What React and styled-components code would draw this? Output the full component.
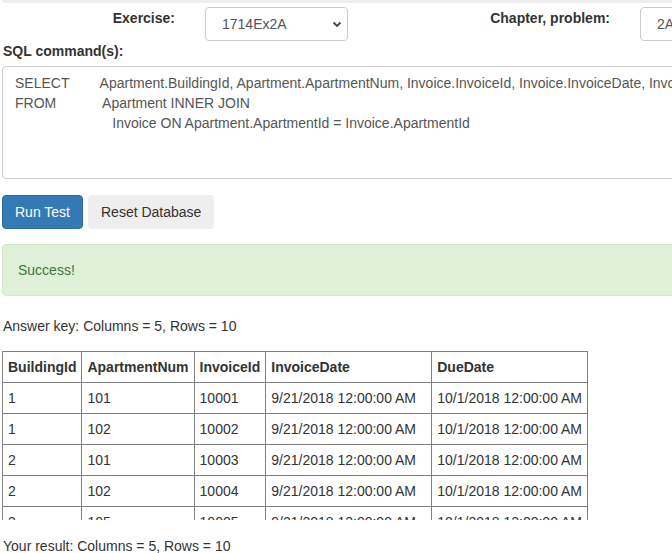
import React from "react";
import styled, { createGlobalStyle } from "styled-components";

const Global = createGlobalStyle`
  html, body { margin: 0; padding: 0; background: #fff; overflow: hidden; }
  body {
    font-family: "Liberation Sans", Arial, sans-serif;
    font-size: 14px;
    line-height: 20px;
    color: #333;
  }
  * { box-sizing: border-box; }
`;

const Page = styled.div`
  width: 820px;
  padding-left: 2px;
`;

const TopPanel = styled.div`
  height: 3px;
  background: #eeeeee;
  border-radius: 0 0 4px 4px;
`;

const ControlRow = styled.div`
  display: grid;
  grid-template-columns: 173px 143px 232px 143px;
  column-gap: 30px;
  align-items: start;
  padding-top: 4px;
`;

const Label = styled.div`
  font-weight: bold;
  text-align: ${(p) => (p.$right ? "right" : "left")};
  padding-top: ${(p) => (p.$right ? "1px" : "0")};
  padding-left: ${(p) => (p.$right ? "0" : "1px")};
`;

const FakeSelect = styled.div`
  height: 34px;
  border: 1px solid #ccc;
  border-radius: 4px;
  display: flex;
  align-items: center;
  justify-content: space-between;
  padding: 0 5px 1px 16px;
  color: #555;
  font-size: 14px;
  white-space: nowrap;
  overflow: hidden;
`;

const SqlLabel = styled(Label)`
  margin-top: 0;
  margin-bottom: 5px;
`;

const Sql = styled.textarea`
  display: block;
  width: 800px;
  height: 113px;
  border: 1px solid #ccc;
  border-radius: 4px;
  padding: 6px 12px;
  font-family: "Liberation Sans", Arial, sans-serif;
  font-size: 14px;
  line-height: 20px;
  color: #555;
  resize: none;
  white-space: pre;
  overflow: hidden;
  outline: none;
`;

const Buttons = styled.div`
  display: flex;
  gap: 5px;
  margin-top: 16px;
`;

const Button = styled.button`
  height: 34px;
  padding: 6px 12px;
  font-family: "Liberation Sans", Arial, sans-serif;
  font-size: 14px;
  line-height: 20px;
  border-radius: 4px;
  border: 1px solid ${(p) => (p.$primary ? "#2e6da4" : "#eeeeee")};
  background: ${(p) => (p.$primary ? "#337ab7" : "#eeeeee")};
  color: ${(p) => (p.$primary ? "#fff" : "#333")};
  cursor: pointer;
`;

const Alert = styled.div`
  margin-top: 15px;
  margin-bottom: 20px;
  width: 800px;
  padding: 15px;
  border: 1px solid #d6e9c6;
  border-radius: 4px;
  background: #dff0d8;
  color: #3c763d;
`;

const Info = styled.div`
  padding-left: 1px;
`;

const TableScroll = styled.div`
  margin-top: 15px;
  height: 169px;
  overflow: hidden;
`;

const Table = styled.table`
  border-collapse: collapse;
`;

const Th = styled.th`
  border: 1px solid #808080;
  padding: 5px;
  text-align: left;
  font-weight: bold;
  white-space: nowrap;
  width: ${(p) => (p.$w ? `${p.$w}px` : "auto")};
`;

const Td = styled.td`
  border: 1px solid #808080;
  padding: 5px;
  white-space: nowrap;
`;

const Result = styled.div`
  margin-top: 16px;
  padding-left: 1px;
`;

const Chevron = () => (
  <svg width="10" height="8" viewBox="0 0 10 8">
    <path d="M1.5 2.5 L5 6 L8.5 2.5" fill="none" stroke="#444" strokeWidth="1.8" />
  </svg>
);

const sql =
  "SELECT" + " ".repeat(8) +
  "Apartment.BuildingId, Apartment.ApartmentNum, Invoice.InvoiceId, Invoice.InvoiceDate, Invoice.DueDate\n" +
  "FROM" + " ".repeat(12) + "Apartment INNER JOIN\n" +
  " ".repeat(25) + "Invoice ON Apartment.ApartmentId = Invoice.ApartmentId";

const columns = [
  { name: "BuildingId" },
  { name: "ApartmentNum" },
  { name: "InvoiceId" },
  { name: "InvoiceDate", w: 166 },
  { name: "DueDate" },
];
const SEP = "9/21/2018 12:00:00 AM";
const OCT = "10/1/2018 12:00:00 AM";
const OCT21 = "10/21/2018 12:00:00 AM";
const NOV = "11/1/2018 12:00:00 AM";
const rows = [
  ["1", "101", "10001", SEP, OCT],
  ["1", "102", "10002", SEP, OCT],
  ["2", "101", "10003", SEP, OCT],
  ["2", "102", "10004", SEP, OCT],
  ["2", "105", "10005", SEP, OCT],
  ["1", "101", "10006", OCT21, NOV],
  ["1", "102", "10007", OCT21, NOV],
  ["2", "101", "10008", OCT21, NOV],
  ["2", "102", "10009", OCT21, NOV],
  ["2", "105", "10010", OCT21, NOV],
];

export default function App() {
  return (
    <>
      <Global />
      <Page>
        <TopPanel />
        <ControlRow>
          <Label $right>Exercise:</Label>
          <FakeSelect>
            <span>1714Ex2A</span>
            <Chevron />
          </FakeSelect>
          <Label $right>Chapter, problem:</Label>
          <FakeSelect>
            <span>2A</span>
            <Chevron />
          </FakeSelect>
        </ControlRow>
        <SqlLabel>SQL command(s):</SqlLabel>
        <Sql readOnly value={sql} />
        <Buttons>
          <Button $primary>Run Test</Button>
          <Button>Reset Database</Button>
        </Buttons>
        <Alert>Success!</Alert>
        <Info>Answer key: Columns = 5, Rows = 10</Info>
        <TableScroll>
          <Table>
            <thead>
              <tr>
                {columns.map((c) => (
                  <Th key={c.name} $w={c.w}>{c.name}</Th>
                ))}
              </tr>
            </thead>
            <tbody>
              {rows.map((r, i) => (
                <tr key={i}>
                  {r.map((v, j) => (
                    <Td key={j}>{v}</Td>
                  ))}
                </tr>
              ))}
            </tbody>
          </Table>
        </TableScroll>
        <Result>Your result: Columns = 5, Rows = 10</Result>
      </Page>
    </>
  );
}
